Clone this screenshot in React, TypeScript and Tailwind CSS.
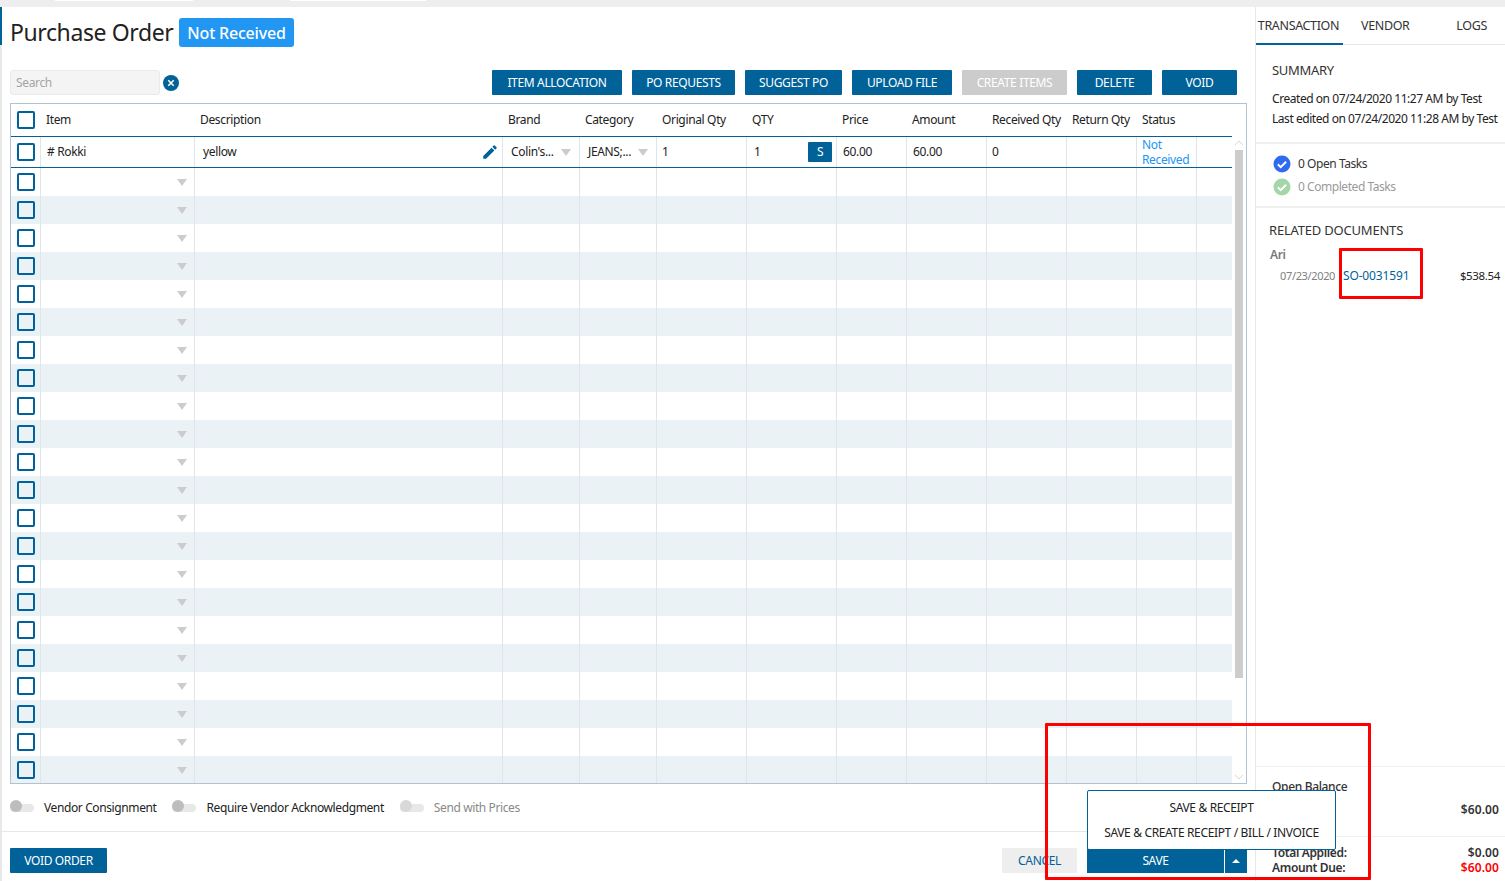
import React from "react";
import { MdEdit } from "react-icons/md";

const gridCols = "grid grid-cols-[30px_154px_308px_77px_77px_90px_90px_70px_80px_80px_70px_60px_36px]";

const toolbar = [
  { label: "ITEM ALLOCATION", w: "w-[130px]" },
  { label: "PO REQUESTS", w: "w-[103px]" },
  { label: "SUGGEST PO", w: "w-[97px]" },
  { label: "UPLOAD FILE", w: "w-[100px]" },
  { label: "CREATE ITEMS", w: "w-[105px]", disabled: true },
  { label: "DELETE", w: "w-[75px]" },
  { label: "VOID", w: "w-[75px]" },
];

const headers = ["Item", "Description", "Brand", "Category", "Original Qty", "QTY", "Price", "Amount", "Received Qty", "Return Qty", "Status"];

const emptyRows = Array.from({ length: 22 }, (_, i) => i);
const emptyCells = [0, 1, 2, 3, 4, 5, 6, 7, 8, 9, 10];

const Checkbox = () => (
  <div className="h-[18px] w-[18px] rounded-[2px] border-2 border-[#006299] bg-transparent" />
);

const Caret = ({ className = "" }: { className?: string }) => (
  <div className={"h-0 w-0 border-x-[5px] border-t-[7px] border-x-transparent border-t-[#cccccc] " + className} />
);

const Toggle = ({ label, muted }: { label: string; muted?: boolean }) => (
  <div className="flex items-center">
    <div className="relative h-2 w-6 rounded-full bg-[#e8e8e8]">
      <div className={"absolute -top-1 left-0 h-3 w-3 rounded-full " + (muted ? "bg-[#d8d8d8]" : "bg-[#bdbdbd]")} />
    </div>
    <span className={"ml-[10px] tracking-[-0.39px] " + (muted ? "text-[#8a8a8a]" : "text-[#222]")}>{label}</span>
  </div>
);

const CheckCircle = ({ color }: { color: string }) => (
  <svg width="18" height="18" viewBox="0 0 18 18">
    <circle cx="9" cy="9" r="8.5" fill={color} />
    <path d="M4.8 9.3l2.9 2.8 5.4-5.4" fill="none" stroke="#fff" strokeWidth="2" />
  </svg>
);

const Row = ({ index }: { index: number }) => (
  <div className={gridCols + " h-[28px] " + (index % 2 === 1 ? "bg-[#ebf2f6]" : "bg-white")}>
    <div className="flex items-center border-r border-[#dfe5ea] pl-[6px]">
      <Checkbox />
    </div>
    <div className="flex items-center justify-end border-r border-[#dfe5ea] pr-[7px]">
      <Caret />
    </div>
    {emptyCells.map((c) => (
      <div key={c} className={c === 10 ? "" : "border-r border-[#dfe5ea]"} />
    ))}
  </div>
);

const ItemTable = () => (
  <div className="ml-[8px] flex h-[681px] w-[1237px] border border-[#b3c2d1]">
    <div className="w-[1222px] overflow-hidden">
      <div className={gridCols + " h-[33px] items-center border-b border-[#006299]"}>
        <div className="flex items-center pl-[6px]">
          <Checkbox />
        </div>
        {headers.map((h) => (
          <div key={h} className="overflow-visible whitespace-nowrap pl-[5px] text-[#222]">
            {h}
          </div>
        ))}
      </div>
      <div className={gridCols + " h-[31px] border-b border-[#006299] text-[#222]"}>
        <div className="flex items-center border-r border-[#dfe5ea] pl-[6px]">
          <Checkbox />
        </div>
        <div className="flex items-center border-r border-[#dfe5ea] pl-[6px]"># Rokki</div>
        <div className="flex items-center justify-between border-r border-[#dfe5ea] pl-[8px] pr-[3px]">
          <span>yellow</span>
          <MdEdit className="h-[18px] w-[18px] text-[#006299]" />
        </div>
        <div className="flex items-center justify-between border-r border-[#dfe5ea] px-[8px]">
          <span>Colin's...</span>
          <Caret />
        </div>
        <div className="flex items-center justify-between border-r border-[#dfe5ea] px-[8px]">
          <span>JEANS;...</span>
          <Caret />
        </div>
        <div className="flex items-center border-r border-[#dfe5ea] pl-[5px]">1</div>
        <div className="flex items-center justify-between border-r border-[#dfe5ea] pl-[7px] pr-[4px]">
          <span>1</span>
          <div className="flex h-5 w-6 items-center justify-center rounded-[1px] bg-[#006299] text-white">S</div>
        </div>
        <div className="flex items-center border-r border-[#dfe5ea] pl-[6px]">60.00</div>
        <div className="flex items-center border-r border-[#dfe5ea] pl-[6px]">60.00</div>
        <div className="flex items-center border-r border-[#dfe5ea] pl-[5px]">0</div>
        <div className="border-r border-[#dfe5ea]" />
        <div className="flex items-center border-r border-[#dfe5ea] pl-[5px] leading-[15px] text-[#2196f3]">
          Not Received
        </div>
        <div />
      </div>
      {emptyRows.map((i) => (
        <Row key={i} index={i} />
      ))}
    </div>
    <div className="relative mt-[33px] w-[14px] bg-white">
      <div className="absolute left-[3px] top-[13px] h-[528px] w-2 bg-[#cdcdcd]" />
      <svg className="absolute left-[2px] top-[3px]" width="10" height="6" viewBox="0 0 10 6">
        <path d="M1 5l4-4 4 4" fill="none" stroke="#d5d5d5" />
      </svg>
      <svg className="absolute bottom-[3px] left-[2px]" width="10" height="6" viewBox="0 0 10 6">
        <path d="M1 1l4 4 4-4" fill="none" stroke="#d5d5d5" />
      </svg>
    </div>
  </div>
);

const MainPanel = () => (
  <div className="relative flex w-[1253px] flex-col">
    <div className="absolute left-[-2px] top-0 h-[38px] w-[2px] bg-[#006299]" />
    <div className="flex h-[63px] items-start pl-[8px] pt-[11px]">
      <h1 className="w-[163px] whitespace-nowrap text-[23px] leading-[29px] tracking-[-0.4px] text-[#222]">Purchase Order</h1>
      <span className="ml-[6px] flex h-[29px] w-[115px] items-center justify-center rounded-[3px] bg-[#2196f3] text-[16px] font-medium tracking-[-0.2px] text-white">
        Not Received
      </span>
    </div>
    <div className="flex h-[33px] items-start justify-between pl-[8px] pr-[18px]">
      <div className="flex items-center">
        <div className="flex h-[25px] w-[150px] items-center rounded-[3px] border border-[#eaeaea] bg-[#f4f4f4] pl-[5px] text-[#a5a5a5]">
          Search
        </div>
        <svg className="ml-[3px]" width="16" height="16" viewBox="0 0 16 16">
          <circle cx="8" cy="8" r="8" fill="#006299" />
          <path d="M5.3 5.3l5.4 5.4M10.7 5.3l-5.4 5.4" stroke="#fff" strokeWidth="1.6" />
        </svg>
      </div>
      <div className="flex gap-[10px]">
        {toolbar.map((b) => (
          <button
            key={b.label}
            className={
              "h-[25px] rounded-[1px] text-white " + b.w + " " + (b.disabled ? "bg-[#cccccc]" : "bg-[#006299]")
            }
          >
            {b.label}
          </button>
        ))}
      </div>
    </div>
    <ItemTable />
    <div className="flex h-[48px] items-center gap-4 border-b border-[#e6e6e6] pl-[8px]">
      <Toggle label="Vendor Consignment" />
      <Toggle label="Require Vendor Acknowledgment" />
      <Toggle label="Send with Prices" muted />
    </div>
    <div className="flex items-start justify-between pl-[8px] pr-[8px] pt-[16px]">
      <button className="h-[25px] w-[97px] rounded-[1px] bg-[#006299] text-white">VOID ORDER</button>
      <div className="flex">
        <button className="mr-[10px] h-[25px] w-[75px] rounded-[1px] bg-[#eeeeee] text-[#006299]">CANCEL</button>
        <button className="h-[25px] w-[137px] bg-[#006299] text-white">SAVE</button>
        <button className="ml-px flex h-[25px] w-[22px] items-center justify-center bg-[#006299]">
          <div className="h-0 w-0 border-x-[4px] border-b-[4px] border-x-transparent border-b-white" />
        </button>
      </div>
    </div>
    <div className="absolute left-[1085px] top-[783px] flex h-[60px] w-[249px] flex-col items-center rounded-[2px] border border-[#006299] bg-white pt-[4px] text-[#222]">
      <div className="flex h-[25px] items-center">SAVE &amp; RECEIPT</div>
      <div className="flex h-[25px] items-center">SAVE &amp; CREATE RECEIPT / BILL / INVOICE</div>
    </div>
  </div>
);

const SidePanel = () => (
  <div className="flex w-[250px] flex-col border-l border-[#e8e8e8] text-[#333]">
    <div className="flex h-[38px] border-b border-[#e8e8e8] text-[12.5px] text-[#333]">
      <div className="flex h-[38px] w-[87px] items-center justify-center whitespace-nowrap border-b-2 border-[#006299] pr-[2px] pt-[2px]">TRANSACTION</div>
      <div className="flex h-[37px] w-[85px] items-center pl-[18px] pt-[1px]">VENDOR</div>
      <div className="flex h-[37px] flex-1 items-center justify-end pr-[18px] pt-[1px]">LOGS</div>
    </div>
    <div className="h-[99px] border-b-2 border-[#efefef] pl-4 pt-[15px] tracking-[-0.45px]">
      <div className="text-[13px] leading-[20px] tracking-[-0.3px]">SUMMARY</div>
      <div className="mt-[9px] whitespace-nowrap leading-5 text-[#222]">Created on 07/24/2020 11:27 AM by Test</div>
      <div className="whitespace-nowrap leading-5 text-[#222]">Last edited on 07/24/2020 11:28 AM by Test</div>
    </div>
    <div className="h-[64px] border-b-2 border-[#efefef] pl-[17px] pt-[8px] tracking-[-0.45px]">
      <div className="flex h-[23px] items-center gap-[7px]">
        <CheckCircle color="#2f6bf2" />
        <span>0 Open Tasks</span>
      </div>
      <div className="flex h-[23px] items-center gap-[7px] text-[#9a9a9a]">
        <CheckCircle color="#a5d6a7" />
        <span>0 Completed Tasks</span>
      </div>
    </div>
    <div className="flex-1 pl-[13px] pt-[12px]">
      <div className="text-[13px] leading-5 tracking-[-0.2px]">RELATED DOCUMENTS</div>
      <div className="mt-[5px] pl-px font-semibold leading-5 text-[#777]">Ari</div>
      <div className="flex h-[22px] items-center pr-[5px]">
        <span className="ml-[11px] w-[63px] whitespace-nowrap text-[11px] text-[#808080]">07/23/2020</span>
        <span className="tracking-[-0.15px] text-[#006299]">SO-0031591</span>
        <span className="ml-auto text-[11.5px] text-[#222]">$538.54</span>
      </div>
    </div>
    <div className="h-[71px] border-y border-[#efefef] pl-4 pr-[6px] pt-[10px] font-medium text-[#333]">
      <div className="leading-5">Open Balance</div>
      <div className="mt-[3px] flex justify-end font-semibold leading-5 tracking-[0.1px]">$60.00</div>
    </div>
    <div className="flex h-[44px] flex-col pl-4 pr-[6px] pt-[8px] font-semibold leading-[15px] text-[#333]">
      <div className="flex justify-between">
        <span>Total Applied:</span>
        <span className="tracking-[0.1px]">$0.00</span>
      </div>
      <div className="flex justify-between">
        <span>Amount Due:</span>
        <span className="tracking-[0.1px] text-[#ff0000]">$60.00</span>
      </div>
    </div>
  </div>
);

export default function App() {
  return (
    <div className="relative h-[881px] w-[1505px] overflow-hidden bg-white font-['Noto_Sans',sans-serif] text-[12px] tracking-[-0.35px]">
      <div className="flex h-[7px] items-start bg-[#eeeeee]">
        <div className="ml-[55px] h-px w-[138px] bg-white" />
        <div className="ml-[97px] h-px w-[136px] bg-white" />
      </div>
      <div className="flex h-[874px]">
        <div className="w-[2px] bg-[#e8e8e8]" />
        <MainPanel />
        <SidePanel />
      </div>
      {/* annotation boxes drawn over the screenshot */}
      <div className="absolute left-[1339px] top-[248px] h-[51px] w-[84px] rounded-[1px] border-[3px] border-[#ff0000]" />
      <div className="absolute left-[1045px] top-[723px] h-[157px] w-[326px] rounded-[1px] border-[3px] border-[#ff0000]" />
    </div>
  );
}
